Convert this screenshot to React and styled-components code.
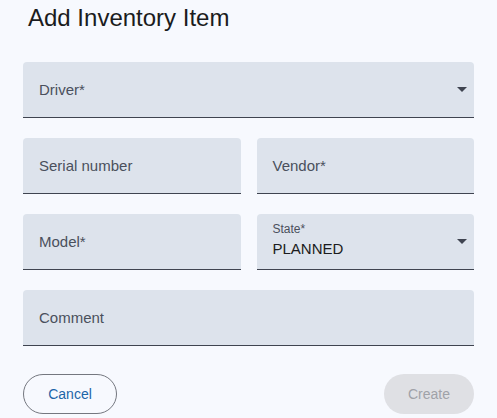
import styled, { createGlobalStyle } from "styled-components";

const Global = createGlobalStyle`
  html, body {
    margin: 0;
    padding: 0;
    background: #f7f9fe;
  }
  * { box-sizing: border-box; }
`;

const Dialog = styled.div`
  width: 497px;
  height: 418px;
  background: #f7f9fe;
  font-family: "Liberation Sans", Arial, sans-serif;
  padding: 3px 23px 0 23px;
  display: flex;
  flex-direction: column;
`;

const Title = styled.h2`
  margin: 0 0 0 5px;
  font-size: 24px;
  font-weight: 400;
  line-height: 30px;
  color: #1b1c20;
`;

const Form = styled.div`
  margin-top: 29px;
  display: flex;
  flex-direction: column;
  gap: 20px;
`;

const Row = styled.div`
  display: grid;
  grid-template-columns: ${(p) => (p.cols === 2 ? "1fr 1fr" : "1fr")};
  gap: 16px;
`;

const Field = styled.div`
  position: relative;
  height: 56px;
  background: #dde3ec;
  border-radius: 4px 4px 0 0;
  border-bottom: 1px solid #3f4450;
  padding: 0 16px;
  display: flex;
  flex-direction: column;
  justify-content: center;
`;

const Label = styled.span`
  font-size: ${(p) => (p.small ? "12px" : "15px")};
  color: #4a505c;
  line-height: ${(p) => (p.small ? "14px" : "20px")};
  margin-top: ${(p) => (p.small ? "-2px" : "0")};
`;

const Value = styled.span`
  font-size: 15px;
  color: #1b1c20;
  line-height: 20px;
  margin-top: 3px;
`;

const Arrow = styled.div`
  position: absolute;
  right: 7px;
  top: 50%;
  margin-top: -3px;
  width: 0;
  height: 0;
  border-left: 5px solid transparent;
  border-right: 5px solid transparent;
  border-top: 5px solid #3f4450;
`;

const Actions = styled.div`
  margin-top: 28px;
  display: flex;
  justify-content: space-between;
`;

const Button = styled.button`
  height: 40px;
  border-radius: 20px;
  font-family: "Liberation Sans", Arial, sans-serif;
  font-size: 14px;
  padding: 0;
  border: ${(p) => (p.variant === "outlined" ? "1px solid #74777f" : "none")};
  background: ${(p) => (p.variant === "outlined" ? "transparent" : "#dfe0e4")};
  color: ${(p) => (p.variant === "outlined" ? "#1c65a8" : "#9fa2a8")};
  width: ${(p) => p.w}px;
`;

const SelectField = ({ label, value }) => (
  <Field>
    {value ? (
      <>
        <Label small>{label}</Label>
        <Value>{value}</Value>
      </>
    ) : (
      <Label>{label}</Label>
    )}
    <Arrow />
  </Field>
);

export default function App() {
  return (
    <Dialog>
      <Global />
      <Title>Add Inventory Item</Title>
      <Form>
        <Row>
          <SelectField label="Driver*" />
        </Row>
        <Row cols={2}>
          <Field><Label>Serial number</Label></Field>
          <Field><Label>Vendor*</Label></Field>
        </Row>
        <Row cols={2}>
          <Field><Label>Model*</Label></Field>
          <SelectField label="State*" value="PLANNED" />
        </Row>
        <Row>
          <Field><Label>Comment</Label></Field>
        </Row>
      </Form>
      <Actions>
        <Button variant="outlined" w={94}>Cancel</Button>
        <Button w={90}>Create</Button>
      </Actions>
    </Dialog>
  );
}
